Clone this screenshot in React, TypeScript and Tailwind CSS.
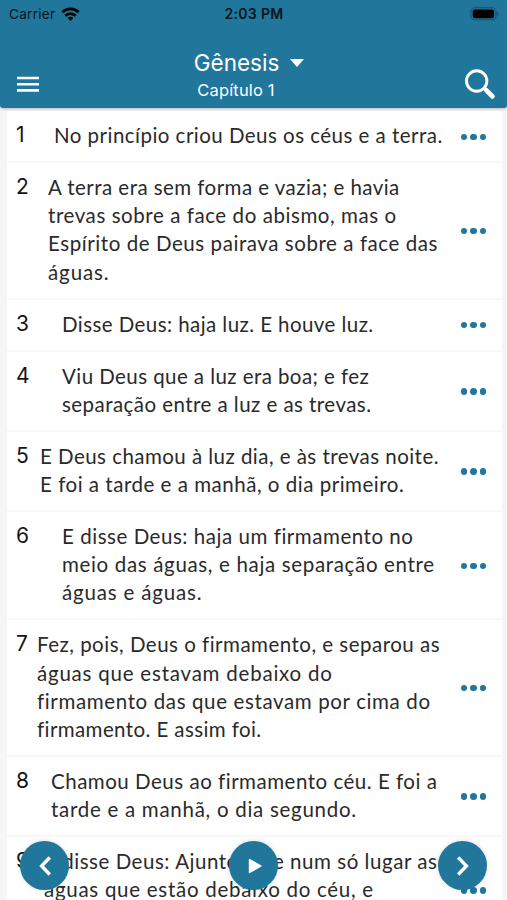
interface Line {
  text: string;
  tracking: string;
}

interface Verse {
  number: number;
  // Left edge of the text, it varies with the length of the verse
  indent: string;
  lines: Line[];
}

const verses: Verse[] = [
  {
    number: 1,
    indent: 'pl-[47px]',
    lines: [{ text: 'No princípio criou Deus os céus e a terra.', tracking: 'tracking-[0.47px]' }],
  },
  {
    number: 2,
    indent: 'pl-[41px]',
    lines: [
      { text: 'A terra era sem forma e vazia; e havia', tracking: 'tracking-[0.45px]' },
      { text: 'trevas sobre a face do abismo, mas o', tracking: 'tracking-[0.57px]' },
      { text: 'Espírito de Deus pairava sobre a face das', tracking: 'tracking-[0.57px]' },
      { text: 'águas.', tracking: 'tracking-[0.9px]' },
    ],
  },
  {
    number: 3,
    indent: 'pl-[55px]',
    lines: [{ text: 'Disse Deus: haja luz. E houve luz.', tracking: 'tracking-[0.43px]' }],
  },
  {
    number: 4,
    indent: 'pl-[55px]',
    lines: [
      { text: 'Viu Deus que a luz era boa; e fez', tracking: 'tracking-[0.43px]' },
      { text: 'separação entre a luz e as trevas.', tracking: 'tracking-[0.45px]' },
    ],
  },
  {
    number: 5,
    indent: 'pl-[33px]',
    lines: [
      { text: 'E Deus chamou à luz dia, e às trevas noite.', tracking: 'tracking-[0.46px]' },
      { text: 'E foi a tarde e a manhã, o dia primeiro.', tracking: 'tracking-[0.52px]' },
    ],
  },
  {
    number: 6,
    indent: 'pl-[55px]',
    lines: [
      { text: 'E disse Deus: haja um firmamento no', tracking: 'tracking-[0.54px]' },
      { text: 'meio das águas, e haja separação entre', tracking: 'tracking-[0.66px]' },
      { text: 'águas e águas.', tracking: 'tracking-[0.82px]' },
    ],
  },
  {
    number: 7,
    indent: 'pl-[30px]',
    lines: [
      { text: 'Fez, pois, Deus o firmamento, e separou as', tracking: 'tracking-[0.49px]' },
      { text: 'águas que estavam debaixo do', tracking: 'tracking-[0.78px]' },
      { text: 'firmamento das que estavam por cima do', tracking: 'tracking-[0.63px]' },
      { text: 'firmamento. E assim foi.', tracking: 'tracking-[0.4px]' },
    ],
  },
  {
    number: 8,
    indent: 'pl-[44px]',
    lines: [
      { text: 'Chamou Deus ao firmamento céu. E foi a', tracking: 'tracking-[0.51px]' },
      { text: 'tarde e a manhã, o dia segundo.', tracking: 'tracking-[0.72px]' },
    ],
  },
  {
    number: 9,
    indent: 'pl-[37px]',
    lines: [
      { text: 'E disse Deus: Ajuntem-se num só lugar as', tracking: 'tracking-[0.54px]' },
      { text: 'águas que estão debaixo do céu, e', tracking: 'tracking-[0.72px]' },
    ],
  },
];

const StatusBar = () => (
  <div className="flex h-7 items-center justify-between pl-[9px] pr-[8px] text-[#06151d]">
    <div className="flex w-[120px] items-center gap-[6px]">
      <span className="text-[13.5px] tracking-[0.3px]">Carrier</span>
      <svg className="mb-[1px] h-[14px] w-[19px]" viewBox="0 0 18 14" fill="none" stroke="#000" strokeWidth="2.7">
        <path d="M0.9 5.2a11.5 11.5 0 0 1 16.2 0" />
        <path d="M3.8 8.7a7.4 7.4 0 0 1 10.4 0" />
        <path d="M9 14L6.2 11.1a4 4 0 0 1 5.6 0z" fill="#000" stroke="none" />
      </svg>
    </div>
    <span className="mb-[1px] text-[14px] font-semibold tracking-[0.3px]">2:03 PM</span>
    <div className="flex w-[120px] justify-end">
      <svg className="mb-[1px] h-[14px] w-[29px]" viewBox="0 0 29 14">
        <rect x="1" y="0.8" width="25" height="12" rx="3.8" fill="none" stroke="#174f69" strokeWidth="1.1" />
        <rect x="2.7" y="2.5" width="21.4" height="8.7" rx="2.2" fill="#000" />
        <path d="M27.3 5v4c1.8-.7 1.8-3.3 0-4z" fill="#174f69" />
      </svg>
    </div>
  </div>
);

const Header = () => (
  <header className="z-10 h-[108px] shrink-0 rounded-b-[3px] bg-[#21769c] shadow-[0_1px_3px_rgba(0,0,0,0.25)]">
    <StatusBar />
    <div className="flex h-20 items-start justify-between pl-[17px] pr-[11px] text-white">
      <button className="mt-[48px] w-[80px]" aria-label="Menu">
        <svg className="h-[16px] w-[22px]" viewBox="0 0 22 16" stroke="#fff" strokeWidth="2.6">
          <path d="M0 2h22M0 8.2h22M0 14.4h22" />
        </svg>
      </button>
      <div className="mt-[20px] flex flex-col items-center">
        <button className="mr-[9px] flex h-[29px] items-center gap-[11px]">
          <span className="text-[22.5px] leading-[29px]">Gênesis</span>
          <svg className="mt-[1px] h-[8px] w-[14px]" viewBox="0 0 14 8">
            <path d="M0 0h14L7 8z" fill="#fff" />
          </svg>
        </button>
        <span className="mr-[35px] mt-[2px] text-[16.5px] leading-[22px] tracking-[0.15px]">Capítulo 1</span>
      </div>
      <button className="mt-[40px] flex w-[86px] justify-end" aria-label="Buscar">
        <svg className="h-[32px] w-[32px]" viewBox="0 0 32 32" fill="none" stroke="#fff" strokeLinecap="round">
          <circle cx="12.7" cy="13" r="10.2" strokeWidth="2.9" />
          <path d="M20.2 20.3l1.6 1.6" strokeWidth="3" />
          <path d="M22.4 22.4l6 6" strokeWidth="4.8" />
        </svg>
      </button>
    </div>
  </header>
);

const VerseRow = ({ verse }: { verse: Verse }) => (
  <li className="relative flex items-center border-b-2 border-[#f8f8f8] pb-[12px] pt-[10px] last:min-h-[108px]">
    <span className="absolute left-[9px] top-[10px] font-['Inter',sans-serif] text-[21px] leading-[28px] text-[#151515]">
      {verse.number}
    </span>
    <div
      className={`flex-1 self-start whitespace-nowrap font-['Lato',sans-serif] text-[20.5px] leading-[28.1px] text-[#2a2a2a] ${verse.indent}`}
    >
      {verse.lines.map((line) => (
        <p key={line.text} className={line.tracking}>
          {line.text}
        </p>
      ))}
    </div>
    <button className="mr-[16px] mt-[3px] flex gap-[3px]" aria-label="Opções">
      <span className="h-[6.4px] w-[6.4px] rounded-full bg-[#21769c]" />
      <span className="h-[6.4px] w-[6.4px] rounded-full bg-[#21769c]" />
      <span className="h-[6.4px] w-[6.4px] rounded-full bg-[#21769c]" />
    </button>
  </li>
);

const roundButton =
  'flex h-[49px] w-[49px] items-center justify-center rounded-full bg-[#21769c] text-white shadow-[0_0_5px_rgba(0,0,0,0.15)]';

const App = () => {
  return (
    <div className="relative flex h-[900px] w-[507px] flex-col overflow-hidden bg-[#f6f6f7] font-['Inter',sans-serif]">
      <Header />
      <ul className="ml-[7px] mr-[5px] mt-[3.2px] bg-white">
        {verses.map((verse) => (
          <VerseRow key={verse.number} verse={verse} />
        ))}
      </ul>

      {/* Floating chapter navigation and audio */}
      <div className="absolute bottom-[10px] left-[20px] right-[20px] flex justify-between">
        <button className={roundButton} aria-label="Capítulo anterior">
          <svg className="h-[20px] w-[12px]" viewBox="0 0 12 20" fill="none" stroke="currentColor" strokeWidth="3.4">
            <path d="M10.8 1.5L2.6 10l8.2 8.5" />
          </svg>
        </button>
        <button className={roundButton} aria-label="Ouvir">
          <svg className="ml-[2px] h-[16px] w-[14px]" viewBox="0 0 14 16">
            <path
              d="M1.5 1.5L13 8 1.5 14.5z"
              fill="currentColor"
              stroke="currentColor"
              strokeWidth="1.4"
              strokeLinejoin="round"
            />
          </svg>
        </button>
        <button className={roundButton} aria-label="Próximo capítulo">
          <svg className="h-[20px] w-[12px]" viewBox="0 0 12 20" fill="none" stroke="currentColor" strokeWidth="3.4">
            <path d="M1.2 1.5L9.4 10l-8.2 8.5" />
          </svg>
        </button>
      </div>
    </div>
  );
};

export default App;
